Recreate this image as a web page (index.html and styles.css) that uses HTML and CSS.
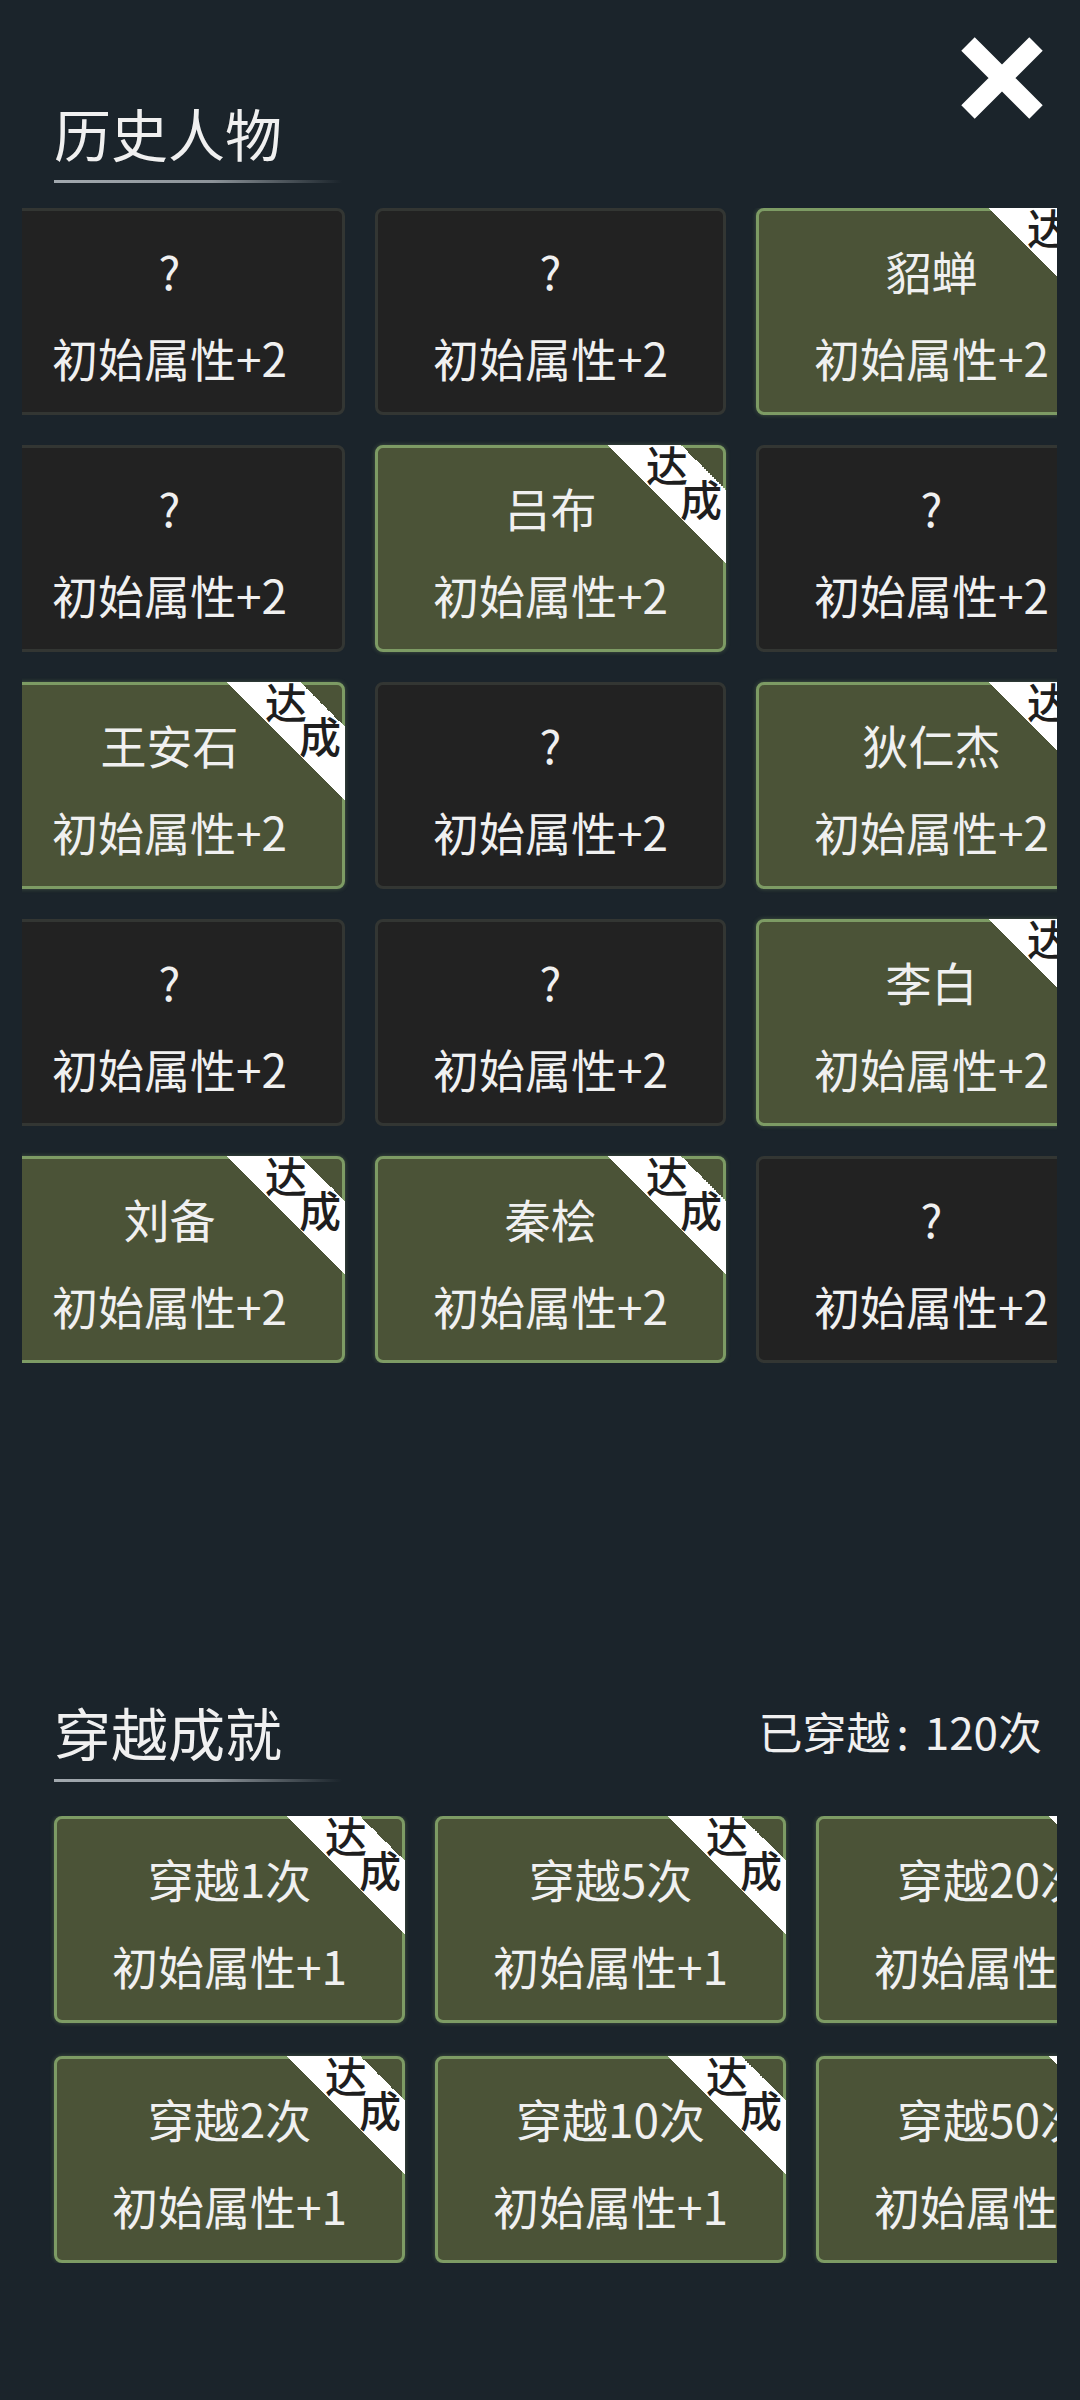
FILE: index.html
```html
<!DOCTYPE html>
<html lang="zh-CN">
<head>
  <meta charset="UTF-8">
  <meta name="viewport" content="width=device-width, initial-scale=1.0">
  <title>成就</title>
  <link rel="stylesheet" href="styles.css">
</head>
<body>

  <button class="close" aria-label="关闭">
    <svg width="82" height="82" viewBox="0 0 82 82">
      <path d="M7 7 L75 75 M75 7 L7 75" stroke="#fff" stroke-width="19" fill="none"/>
    </svg>
  </button>

  <!-- 历史人物 -->
  <section class="people">
    <div class="head">
      <h2 class="title">历史人物</h2>
    </div>
    <div class="rule"></div>
    <div class="clip">
      <div class="grid">
        <div class="card"><div>?</div><div>初始属性+2</div></div>
        <div class="card"><div>?</div><div>初始属性+2</div></div>
        <div class="card done"><div>貂蝉</div><div>初始属性+2</div><div class="badge"><span class="b1">达</span><span class="b2">成</span></div></div>

        <div class="card"><div>?</div><div>初始属性+2</div></div>
        <div class="card done"><div>吕布</div><div>初始属性+2</div><div class="badge"><span class="b1">达</span><span class="b2">成</span></div></div>
        <div class="card"><div>?</div><div>初始属性+2</div></div>

        <div class="card done"><div>王安石</div><div>初始属性+2</div><div class="badge"><span class="b1">达</span><span class="b2">成</span></div></div>
        <div class="card"><div>?</div><div>初始属性+2</div></div>
        <div class="card done"><div>狄仁杰</div><div>初始属性+2</div><div class="badge"><span class="b1">达</span><span class="b2">成</span></div></div>

        <div class="card"><div>?</div><div>初始属性+2</div></div>
        <div class="card"><div>?</div><div>初始属性+2</div></div>
        <div class="card done"><div>李白</div><div>初始属性+2</div><div class="badge"><span class="b1">达</span><span class="b2">成</span></div></div>

        <div class="card done"><div>刘备</div><div>初始属性+2</div><div class="badge"><span class="b1">达</span><span class="b2">成</span></div></div>
        <div class="card done"><div>秦桧</div><div>初始属性+2</div><div class="badge"><span class="b1">达</span><span class="b2">成</span></div></div>
        <div class="card"><div>?</div><div>初始属性+2</div></div>
      </div>
    </div>
  </section>

  <!-- 穿越成就 -->
  <section class="travel">
    <div class="head">
      <h2 class="title">穿越成就</h2>
      <span class="count">已穿越<span class="colon">:</span>120次</span>
    </div>
    <div class="rule"></div>
    <div class="clip">
      <div class="grid">
        <div class="card done"><div>穿越1次</div><div>初始属性+1</div><div class="badge"><span class="b1">达</span><span class="b2">成</span></div></div>
        <div class="card done"><div>穿越5次</div><div>初始属性+1</div><div class="badge"><span class="b1">达</span><span class="b2">成</span></div></div>
        <div class="card done"><div>穿越20次</div><div>初始属性+1</div><div class="badge"><span class="b1">达</span><span class="b2">成</span></div></div>

        <div class="card done"><div>穿越2次</div><div>初始属性+1</div><div class="badge"><span class="b1">达</span><span class="b2">成</span></div></div>
        <div class="card done"><div>穿越10次</div><div>初始属性+1</div><div class="badge"><span class="b1">达</span><span class="b2">成</span></div></div>
        <div class="card done"><div>穿越50次</div><div>初始属性+1</div><div class="badge"><span class="b1">达</span><span class="b2">成</span></div></div>
      </div>
    </div>
  </section>

</body>
</html>
```

FILE: styles.css
```css
body {
  margin: 0;
  position: relative;
  background: #1b242b;
  color: #f0f0f0;
  font-family: "Noto Sans CJK SC", "Noto Sans", sans-serif;
}

.close {
  position: absolute;
  top: 37px;
  right: 37px;
  width: 82px;
  height: 82px;
  padding: 0;
  border: none;
  background: none;
  cursor: pointer;
}

.close svg {
  display: block;
}

.people {
  padding-top: 104px;
}

.travel {
  margin-top: 340px;
}

.head {
  display: flex;
  justify-content: space-between;
  align-items: center;
  padding: 0 38px 0 54px;
}

.title {
  margin: 0;
  font-size: 57px;
  line-height: 56px;
  font-weight: 400;
}

.count {
  font-size: 44px;
  line-height: 56px;
}

.colon {
  margin: 0 16px 0 6px;
}

.rule {
  margin: 20px 0 0 54px;
  width: 288px;
  height: 3px;
  background: linear-gradient(to right, #a2a9af 0%, #8c9399 55%, rgba(140, 147, 153, 0) 100%);
}

/* cards sit in a clipped strip, like a scrolled list */
.clip {
  margin: 25px 23px 0 22px;
  overflow: hidden;
}

.travel .clip {
  margin-top: 34px;
}

.grid {
  display: grid;
  grid-template-columns: repeat(3, 351px);
  column-gap: 30px;
  row-gap: 30px;
}

.people .grid {
  margin-left: -28px;
}

.travel .grid {
  margin-left: 32px;
  row-gap: 33px;
}

.card {
  position: relative;
  box-sizing: border-box;
  height: 207px;
  padding-top: 29px;
  border: 3px solid #333633;
  border-radius: 8px;
  background: #222222;
  display: flex;
  flex-direction: column;
  align-items: center;
  gap: 27px;
  font-size: 46px;
  line-height: 60px;
  white-space: nowrap;
}

.card.done {
  background: #4b5337;
  border-color: #7d9b64;
  box-shadow: 0 0 4px rgba(125, 155, 100, 0.45);
}

.badge {
  position: absolute;
  top: -3px;
  right: -3px;
  width: 120px;
  height: 120px;
  background: linear-gradient(to bottom left, transparent 18.75%, #fff 18.75%, #fff 49.5%, transparent 49.5%);
  color: #1e1e1e;
  font-size: 42px;
  line-height: 42px;
  font-weight: 500;
}

.badge span {
  position: absolute;
  width: 42px;
  text-align: center;
}

.b1 {
  left: 40px;
  top: -2px;
}

.b2 {
  left: 74px;
  top: 32px;
}
```
